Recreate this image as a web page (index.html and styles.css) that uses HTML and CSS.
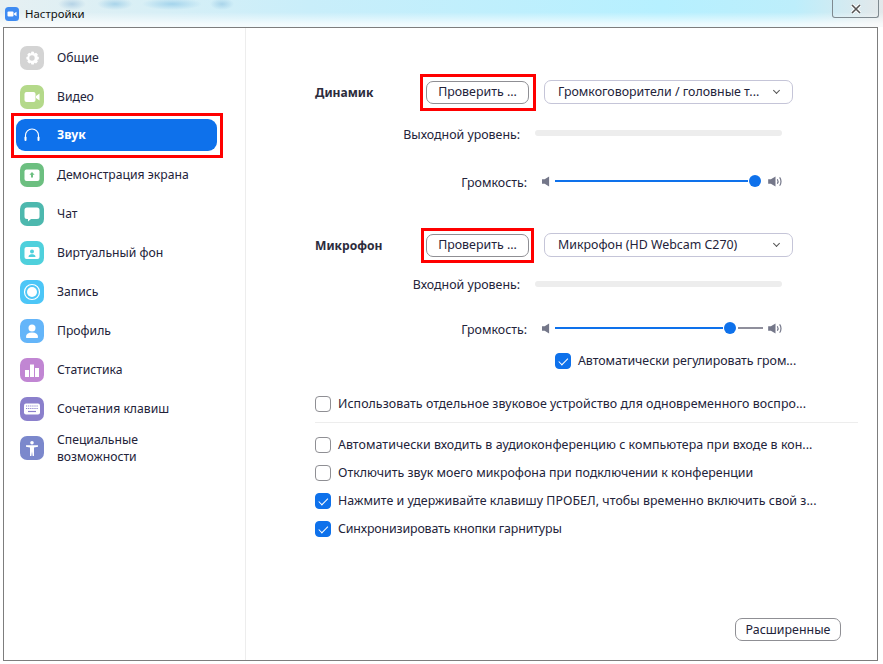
FILE: index.html
```html
<!DOCTYPE html>
<html>

<head>
  <meta charset="utf-8" />
  <title>Настройки</title>
  <meta name="viewport" content="width=device-width, initial-scale=1">
  <link rel="stylesheet" href="styles.css">
</head>

<body>
  <div class="titlebar">
    <svg class="app-icon" viewBox="0 0 14 14"><rect width="14" height="14" rx="3.5" fill="#3d8bf2"/><rect x="2.5" y="4.5" width="6" height="5" rx="1" fill="#fff"/><path d="M9 6.5l2.5-1.7v4.4L9 7.5z" fill="#fff"/></svg>
    <span class="title">Настройки</span>
    <div class="close">
      <svg viewBox="0 0 12 10"><path d="M2 1l8 8M10 1l-8 8" stroke="#fff" stroke-width="3.4"/><path d="M2 1l8 8M10 1l-8 8" stroke="#555" stroke-width="1.6"/></svg>
    </div>
  </div>

  <div class="window">
    <ul class="sidebar">
      <li>
        <span class="icon gray"><svg viewBox="0 0 24 24"><path d="M12 5.500l1.800.3.6 1.700 1.700-.7 1.800 1.800-.8 1.600 1.700.7v2.400l-1.700.7.8 1.600-1.800 1.800-1.700-.7-.6 1.700h-2.400l-.6-1.700-1.700.7-1.800-1.800.8-1.600-1.700-.7v-2.400l1.700-.7-.8-1.600 1.800-1.800 1.700.7.6-1.700z" fill="#fff"/><circle cx="12" cy="12" r="2.700" fill="#d4d4d4"/></svg></span>
        <span>Общие</span>
      </li>
      <li>
        <span class="icon green"><svg viewBox="0 0 24 24"><rect x="4.500" y="7" width="11" height="10" rx="2" fill="#fff"/><path d="M16 11l3.500-2.500v7L16 13z" fill="#fff"/></svg></span>
        <span>Видео</span>
      </li>
      <li class="active">
        <span class="icon"><svg viewBox="0 0 24 24"><path d="M5.500 16v-3.500a6.500 6.500 0 0 1 13 0V16" fill="none" stroke="#fff" stroke-width="1.100"/><rect x="4.500" y="13.500" width="2" height="4.500" rx="1" fill="#fff"/><rect x="17.500" y="13.500" width="2" height="4.500" rx="1" fill="#fff"/></svg></span>
        <span>Звук</span>
      </li>
      <li>
        <span class="icon share"><svg viewBox="0 0 24 24"><rect x="4.500" y="6.500" width="15" height="11.500" rx="2" fill="#fff"/><path d="M12 9l2.600 2.800h-1.600v2.700h-2v-2.700H9.400z" fill="#6cbf80"/></svg></span>
        <span>Демонстрация экрана</span>
      </li>
      <li>
        <span class="icon teal"><svg viewBox="0 0 24 24"><path d="M7 5.500h10a2.500 2.500 0 0 1 2.500 2.500v6.500a2.500 2.500 0 0 1-2.500 2.500h-6l-3 2.500v-2.500H7a2.500 2.500 0 0 1-2.500-2.500V8A2.500 2.500 0 0 1 7 5.500z" fill="#fff"/></svg></span>
        <span>Чат</span>
      </li>
      <li>
        <span class="icon cyan"><svg viewBox="0 0 24 24"><rect x="4.500" y="6" width="15" height="12" rx="2" fill="#fff"/><circle cx="12" cy="10.500" r="2" fill="#4fd0dc"/><path d="M8.500 16c0-2 1.500-2.700 3.500-2.700s3.500.7 3.500 2.700z" fill="#4fd0dc"/></svg></span>
        <span>Виртуальный фон</span>
      </li>
      <li>
        <span class="icon sky"><svg viewBox="0 0 24 24"><circle cx="12" cy="12" r="7.500" fill="none" stroke="#fff" stroke-width="1.200"/><circle cx="12" cy="12" r="5" fill="#fff"/></svg></span>
        <span>Запись</span>
      </li>
      <li>
        <span class="icon blue"><svg viewBox="0 0 24 24"><circle cx="12" cy="9" r="3.500" fill="#fff"/><path d="M6 18c0-3 2-4.500 6-4.500s6 1.500 6 4.500c0 .6-.4 1-1 1H7c-.6 0-1-.4-1-1z" fill="#fff"/></svg></span>
        <span>Профиль</span>
      </li>
      <li>
        <span class="icon purple"><svg viewBox="0 0 24 24"><rect x="5" y="12" width="4" height="7" fill="#fff"/><rect x="10" y="6.500" width="4" height="12.500" fill="#fff"/><rect x="15" y="10" width="4" height="9" fill="#fff"/></svg></span>
        <span>Статистика</span>
      </li>
      <li>
        <span class="icon violet"><svg viewBox="0 0 24 24"><rect x="4" y="6.500" width="16" height="11" rx="2" fill="#fff"/><path d="M6 9h12M6 11.500h12" stroke="#8b80cc" stroke-width="1.200" stroke-dasharray="1.200 .9"/><path d="M8 14.500h8" stroke="#8b80cc" stroke-width="1.200"/></svg></span>
        <span>Сочетания клавиш</span>
      </li>
      <li class="two-lines">
        <span class="icon indigo"><svg viewBox="0 0 24 24"><circle cx="12" cy="6.800" r="1.800" fill="#fff"/><path d="M6 9.300h12v1.500l-4 .7V20h-1.400l-.6-4.500-.6 4.500H10v-8.500l-4-.7z" fill="#fff"/></svg></span>
        <span>Специальные<br>возможности</span>
      </li>
    </ul>

    <div class="content">
      <section class="device">
        <h3>Динамик</h3>
        <button class="btn">Проверить ...</button>
        <div class="select">Громкоговорители / головные т...<i class="chevron"></i></div>
        <div class="label level">Выходной уровень:</div>
        <div class="meter"></div>
        <div class="label volume">Громкость:</div>
        <div class="slider">
          <svg class="spk" viewBox="0 0 9 12"><path d="M0 3.500h3L8 .500v11l-5-3H0z" fill="#747789"/></svg>
          <div class="track">
            <span class="fill" style="width:193px"></span><span class="thumb"></span>
          </div>
          <svg class="spk-loud" viewBox="0 0 16 12"><path d="M0 3.500h3L8 .500v11l-5-3H0z" fill="#747789"/><path d="M10 3.500c1 1.500 1 3.500 0 5M12.500 1.500c2 2.500 2 6.500 0 9" fill="none" stroke="#747789" stroke-width="1.300"/></svg>
        </div>
      </section>

      <section class="device second">
        <h3>Микрофон</h3>
        <button class="btn">Проверить ...</button>
        <div class="select">Микрофон (HD Webcam C270)<i class="chevron"></i></div>
        <div class="label level">Входной уровень:</div>
        <div class="meter"></div>
        <div class="label volume">Громкость:</div>
        <div class="slider">
          <svg class="spk" viewBox="0 0 9 12"><path d="M0 3.500h3L8 .500v11l-5-3H0z" fill="#747789"/></svg>
          <div class="track">
            <span class="fill" style="width:168px"></span><span class="thumb"></span><span class="rest"></span>
          </div>
          <svg class="spk-loud" viewBox="0 0 16 12"><path d="M0 3.500h3L8 .500v11l-5-3H0z" fill="#747789"/><path d="M10 3.500c1 1.500 1 3.500 0 5M12.500 1.500c2 2.500 2 6.500 0 9" fill="none" stroke="#747789" stroke-width="1.300"/></svg>
        </div>
        <label class="check auto"><i class="box on"></i>Автоматически регулировать гром...</label>
      </section>

      <label class="check single wide"><i class="box"></i>Использовать отдельное звуковое устройство для одновременного воспро...</label>
      <div class="sep"></div>
      <div class="options">
        <label class="check wide"><i class="box"></i>Автоматически входить в аудиоконференцию с компьютера при входе в кон...</label>
        <label class="check"><i class="box"></i>Отключить звук моего микрофона при подключении к конференции</label>
        <label class="check wide"><i class="box on"></i>Нажмите и удерживайте клавишу ПРОБЕЛ, чтобы временно включить свой з...</label>
        <label class="check tight"><i class="box on"></i>Синхронизировать кнопки гарнитуры</label>
      </div>

      <div class="bottom">
        <button class="btn advanced">Расширенные</button>
      </div>
    </div>
  </div>

  <!-- red marks over the screenshot -->
  <div class="mark mark-sound"></div>
  <div class="mark mark-test1"></div>
  <div class="mark mark-test2"></div>
</body>

</html>
```

FILE: styles.css
```css
* {
  margin: 0;
  padding: 0;
  box-sizing: border-box;
}

html, body {
  height: 100%;
}

body {
  position: relative;
  overflow: hidden;
  display: flex;
  flex-direction: column;
  background: #fff;
  font: 12.4px/18px 'Noto Sans', sans-serif;
  color: #23233a;
}

button {
  font: inherit;
  color: inherit;
  background: #fff;
}

.titlebar {
  display: flex;
  align-items: center;
  height: 27px;
  padding: 0 0 0 5px;
  background:
    linear-gradient(180deg, rgba(255, 255, 255, 0) 45%, rgba(255, 255, 255, .75) 90%),
    radial-gradient(ellipse 14px 6px at 72px 4px, #b5d3e6, transparent),
    radial-gradient(ellipse 18px 6px at 115px 4px, #a9d4ea, transparent),
    radial-gradient(ellipse 30px 6px at 172px 4px, #a4d4ec, transparent),
    radial-gradient(ellipse 12px 6px at 222px 4px, #a9d4ea, transparent),
    linear-gradient(90deg, #e6f0f2, #c9eefa 35%, #b6f0ff 75%, #bdeefb 90%, #e4e8ea);
}
.app-icon {
  width: 14px;
  height: 14px;
}
.title {
  margin-left: 6px;
  font-size: 11.4px;
  color: #111;
}
.close {
  display: flex;
  align-items: center;
  justify-content: center;
  width: 47px;
  height: 18px;
  margin: 0 4px 9px auto;
  border: 1px solid #7f8a90;
  border-top: 0;
  border-radius: 0 0 3px 3px;
}
.close svg {
  width: 12px;
  height: 10px;
}

.window {
  flex: 1;
  display: flex;
  margin: 0 5px 3px 3px;
  border: 1px solid #7d7d7d;
  background: #fff;
}

.sidebar {
  width: 242px;
  flex: none;
  padding: 10px 28px 0 12px;
  border-right: 1px solid #ededed;
  font-size: 12.2px;
  list-style: none;
}
.sidebar li {
  display: flex;
  align-items: center;
  height: 39px;
  padding-left: 4px;
  border-radius: 9px;
  gap: 13px;
}
.sidebar li.active {
  height: 32px;
  margin: 3px 0 4px;
  background: #0e71eb;
  color: #fff;
  font-weight: 700;
}
.sidebar li.two-lines {
  line-height: 17px;
}

.icon {
  flex: none;
  width: 24px;
  height: 24px;
  border-radius: 7px;
}
.icon svg {
  display: block;
  width: 24px;
  height: 24px;
}
.gray { background: #d4d4d4; }
.green { background: #b4d98a; }
.share { background: #6cbf80; }
.teal { background: #4db8ae; }
.cyan { background: #4fd0dc; }
.sky { background: #4cc6f7; }
.blue { background: #64b5f9; }
.purple { background: #c186d3; }
.violet { background: #8b80cc; }
.indigo { background: #7b88cc; }

.content {
  flex: 1;
  display: flex;
  flex-direction: column;
  padding: 52px 19px 19px 69px;
}

.device {
  display: grid;
  grid-template-columns: 111px 118px 249px;
  grid-template-rows: 24px 58px 38px;
  align-items: center;
}
.device h3 {
  margin-top: 2px;
  font-size: 12.1px;
  font-weight: 700;
  color: #2c2c3c;
}
.device.second {
  margin-top: 33px;
  grid-template-rows: 24px 54px 34px 32px;
}

.btn {
  height: 23px;
  border: 1px solid #8f8f94;
  border-radius: 7px;
}
.device .btn {
  width: 103px;
}
.select {
  position: relative;
  height: 24px;
  padding-left: 13px;
  line-height: 22px;
  border: 1px solid #c5c5d8;
  border-radius: 7px;
}
.chevron {
  position: absolute;
  right: 13px;
  top: 7px;
  width: 5px;
  height: 5px;
  border-right: 1px solid #555;
  border-bottom: 1px solid #555;
  transform: rotate(45deg);
}

.label {
  grid-column: 1 / 3;
  justify-self: end;
  margin-top: 4px;
}
.label.level {
  padding-right: 24px;
}
.second .label.level {
  margin-top: 2px;
}
.label.volume {
  padding-right: 17px;
}

.meter {
  width: 247px;
  height: 6px;
  margin-left: -9px;
  border-radius: 3px;
  background: #ededed;
}

.slider {
  display: flex;
  align-items: center;
  width: 241px;
  height: 16px;
  margin-left: -2px;
}
.spk {
  flex: none;
  width: 8px;
  height: 11px;
}
.spk-loud {
  flex: none;
  width: 15px;
  height: 11px;
}
.track {
  flex: 1;
  display: flex;
  align-items: center;
  margin: 0 5px;
}
.fill {
  flex: none;
  height: 2px;
  margin-right: 1px;
  background: #0e71eb;
}
.thumb {
  flex: none;
  width: 12px;
  height: 12px;
  border-radius: 50%;
  background: #0e71eb;
}
.rest {
  flex: 1;
  height: 2px;
  margin-left: 2px;
  background: #8f8f9c;
}

.check {
  display: flex;
  align-items: center;
  gap: 7px;
  height: 28px;
  white-space: nowrap;
}
.check.wide {
  letter-spacing: .05px;
}
.check.tight {
  letter-spacing: -.15px;
}
.box {
  flex: none;
  position: relative;
  width: 16px;
  height: 16px;
  border: 1px solid #8f8f94;
  border-radius: 4px;
  background: #fff;
}
.box.on {
  border-color: #0e71eb;
  background: #0e71eb;
}
.box.on:after {
  content: '';
  position: absolute;
  left: 5px;
  top: 2px;
  width: 4px;
  height: 7.500px;
  border-right: 1.300px solid #fff;
  border-bottom: 1.300px solid #fff;
  transform: rotate(45deg);
}

.check.auto {
  grid-column: 3;
  margin-left: 11px;
  letter-spacing: -.05px;
}

.single {
  margin-top: 13px;
}
.sep {
  height: 1px;
  margin-top: 4px;
  background: #ededed;
}
.options {
  margin-top: 8px;
}

.bottom {
  margin-top: auto;
  padding-right: 17px;
  display: flex;
  justify-content: flex-end;
}
.advanced {
  width: 106px;
}

.mark {
  position: absolute;
  border: 3px solid #f00;
}
.mark-sound {
  left: 11px;
  top: 113px;
  width: 212px;
  height: 45px;
}
.mark-test1 {
  left: 420px;
  top: 74px;
  width: 116px;
  height: 37px;
}
.mark-test2 {
  left: 421px;
  top: 228px;
  width: 113px;
  height: 35px;
}
```
